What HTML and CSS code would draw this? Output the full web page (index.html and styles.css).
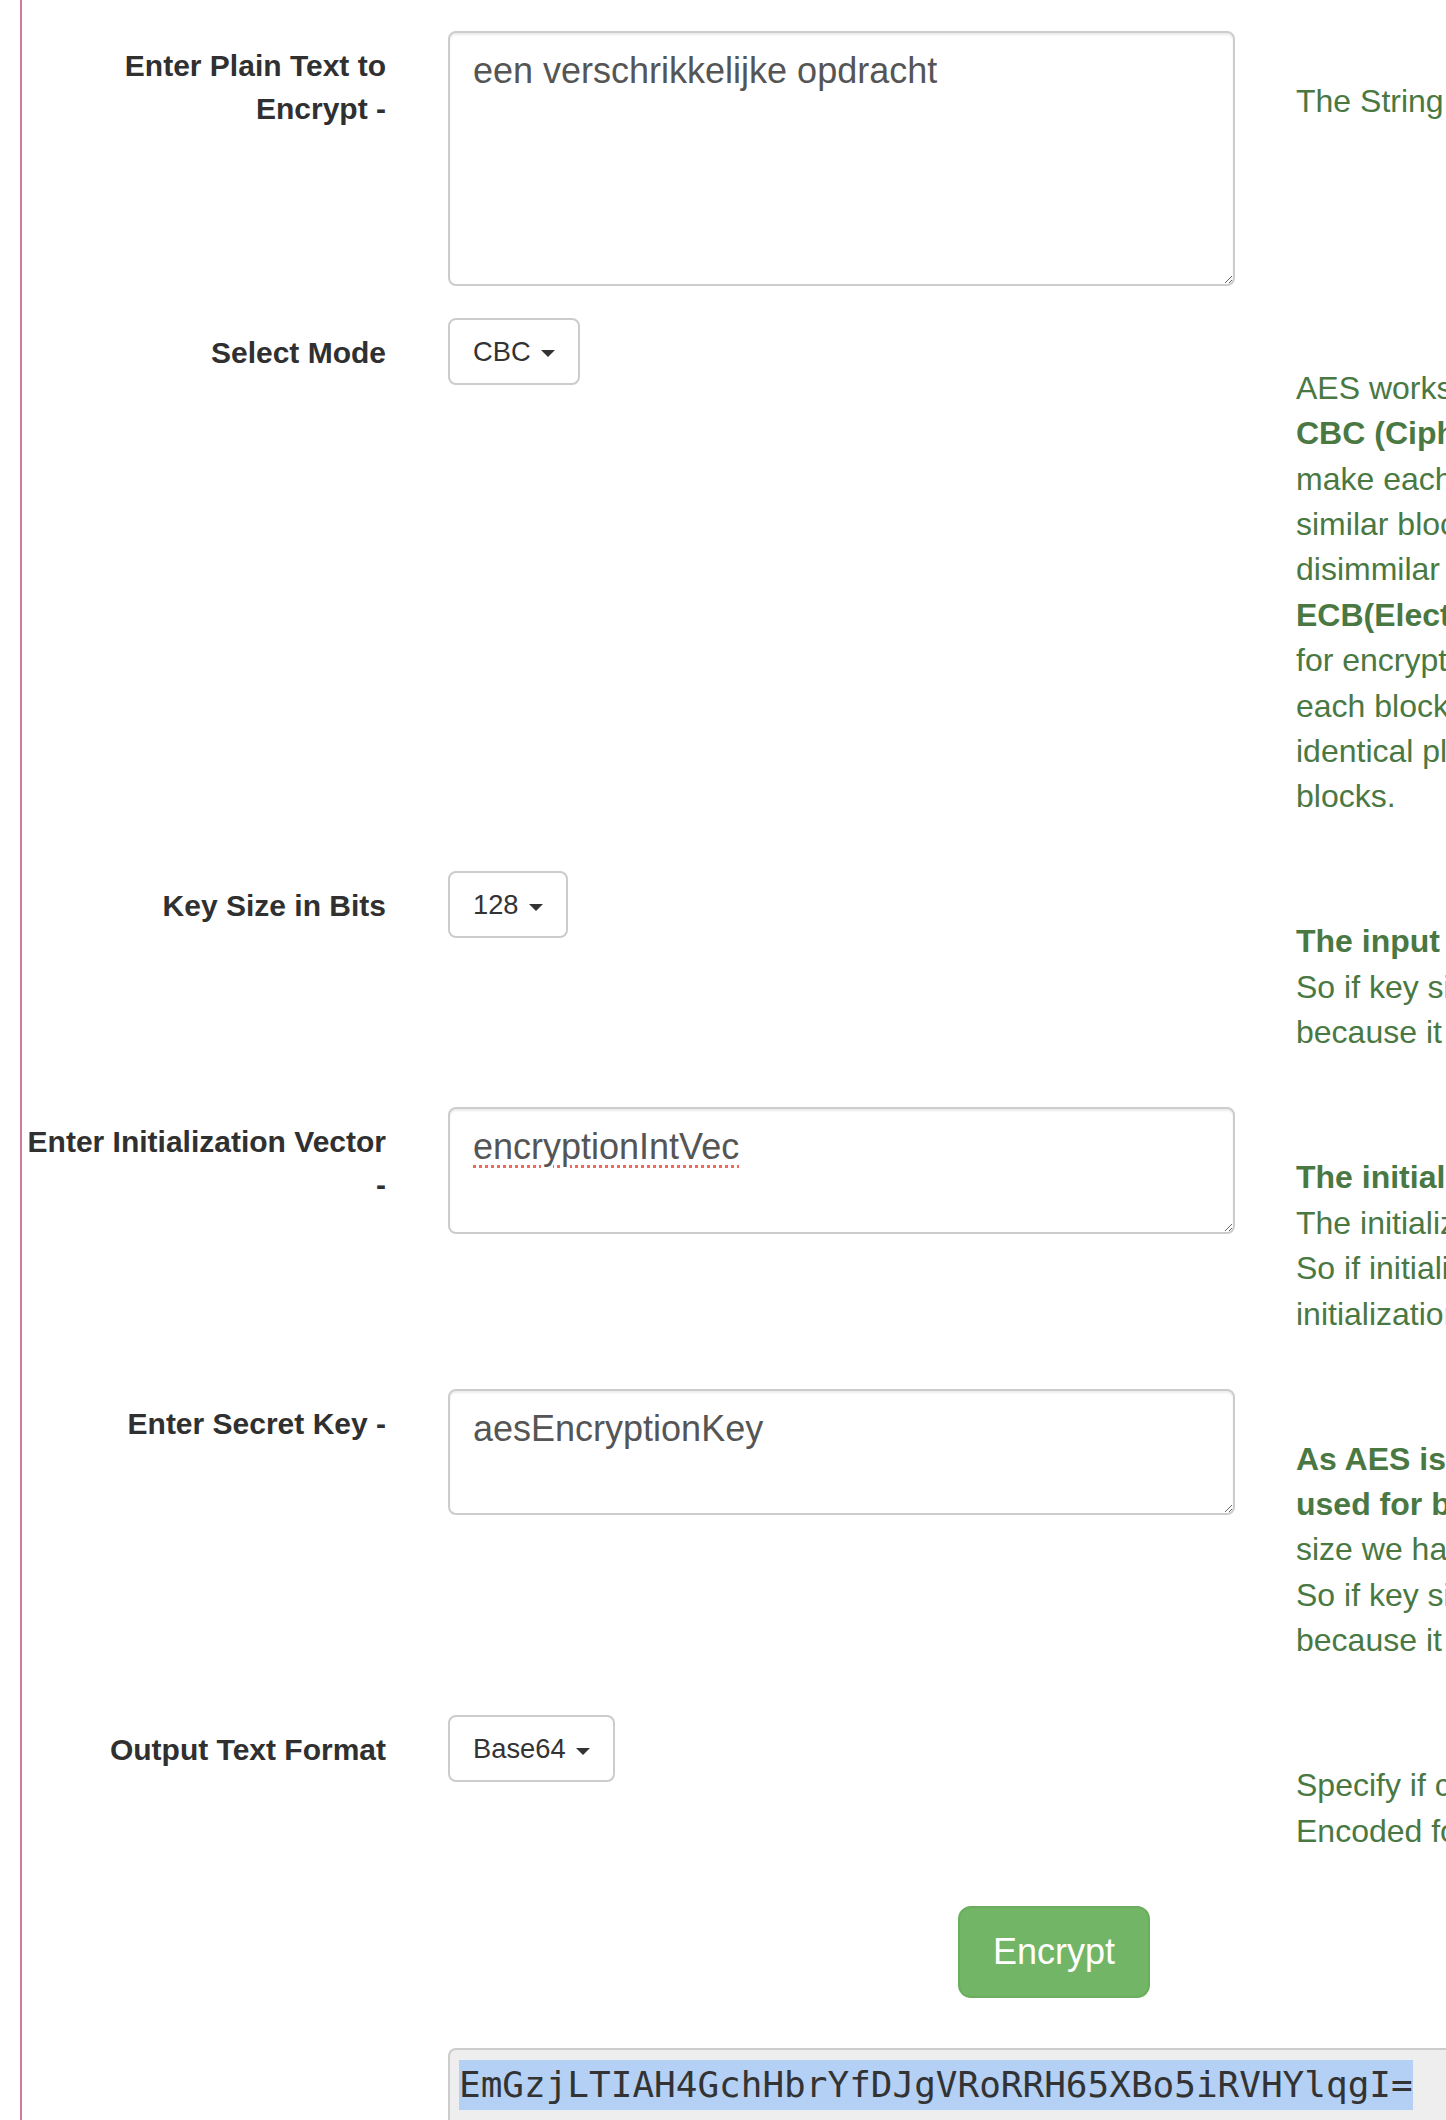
FILE: index.html
```html
<!DOCTYPE html>
<html lang="en">
<head>
<meta charset="utf-8">
<title>AES Encryption</title>
<link rel="stylesheet" href="styles.css">
</head>
<body>
<div class="page">
  <form class="form">
    <div class="group">
      <label class="label">Enter Plain Text to<br>Encrypt -</label>
      <div class="control">
        <textarea class="field field-tall" spellcheck="false">een verschrikkelijke opdracht</textarea>
      </div>
      <div class="help">
        <span class="line">The String that you want to encrypt.</span>
      </div>
    </div>

    <div class="group">
      <label class="label">Select Mode</label>
      <div class="control">
        <button type="button" class="dropdown">CBC<span class="caret"></span></button>
      </div>
      <div class="help">
        <span class="line">AES works with different modes of operation.</span>
        <span class="line"><b>CBC (Cipher Block Chaining)</b> requires an IV to</span>
        <span class="line">make each message unique, which means that</span>
        <span class="line">similar blocks of plain text are encrypted into</span>
        <span class="line">disimmilar cipher text blocks.</span>
        <span class="line"><b>ECB(Electronic Code Book)</b> does not need an IV</span>
        <span class="line">for encryption, the plain text is divided into blocks and</span>
        <span class="line">each block is encrypted separately, hence</span>
        <span class="line">identical plain text blocks give identical cipher text</span>
        <span class="line">blocks.</span>
      </div>
    </div>

    <div class="group">
      <label class="label">Key Size in Bits</label>
      <div class="control">
        <button type="button" class="dropdown">128<span class="caret"></span></button>
      </div>
      <div class="help">
        <span class="line"><b>The input key length must match the key size.</b></span>
        <span class="line">So if key size is 128 bits, the secret key must be 16 characters</span>
        <span class="line">because it is 16 bytes long.</span>
      </div>
    </div>

    <div class="group">
      <label class="label">Enter Initialization Vector<br>-</label>
      <div class="control">
        <textarea class="field field-iv" spellcheck="false">encryptionIntVec</textarea>
      </div>
      <div class="help">
        <span class="line"><b>The initialization vector is optional.</b></span>
        <span class="line">The initialization vector is 16 bytes long.</span>
        <span class="line">So if initialization vector is used, it must be a 16 character</span>
        <span class="line">initialization vector.</span>
      </div>
    </div>

    <div class="group">
      <label class="label">Enter Secret Key -</label>
      <div class="control">
        <textarea class="field field-key" spellcheck="false">aesEncryptionKey</textarea>
      </div>
      <div class="help">
        <span class="line"><b>As AES is a symmetric encryption, the same secret key is</b></span>
        <span class="line"><b>used for both encryption and decryption.</b> Based on the key</span>
        <span class="line">size we have selected, the length of the secret key varies.</span>
        <span class="line">So if key size is 128 bits, the secret key must be 16 characters</span>
        <span class="line">because it is 16 bytes long.</span>
      </div>
    </div>

    <div class="group">
      <label class="label">Output Text Format</label>
      <div class="control">
        <button type="button" class="dropdown">Base64<span class="caret"></span></button>
      </div>
      <div class="help">
        <span class="line">Specify if cipher text should be Hex or Base64</span>
        <span class="line">Encoded format.</span>
      </div>
    </div>

    <div class="actions">
      <button type="button" class="btn-encrypt">Encrypt</button>
    </div>

    <div class="output-row">
      <div class="output"><span class="selected">EmGzjLTIAH4GchHbrYfDJgVRoRRH65XBo5iRVHYlqgI=</span></div>
    </div>
  </form>
</div>
</body>
</html>
```
FILE: styles.css
```css
html, body {
  margin: 0;
  padding: 0;
  overflow: hidden;
  background: #fff;
}

body {
  font-family: "Liberation Sans", Arial, Helvetica, sans-serif;
  color: #333;
  width: 1446px;
  height: 2120px;
}

.page {
  margin-left: 20px;
  border-left: 2px solid #d27b9c;
  height: 2120px;
  width: 2100px;
  box-sizing: border-box;
  padding-top: 31px;
}

.form {
  display: flex;
  flex-direction: column;
}

.group {
  display: grid;
  grid-template-columns: 426px 787px 848px;
  align-items: start;
  margin-bottom: 31.7px;
}

.label {
  box-sizing: border-box;
  padding-right: 62px;
  padding-top: 14px;
  text-align: right;
  font-weight: bold;
  font-size: 30px;
  line-height: 42.7px;
  white-space: nowrap;
  color: #303030;
}

.control {
  display: flex;
  align-items: flex-start;
}

.field {
  box-sizing: border-box;
  width: 787px;
  border: 2px solid #ccc;
  border-radius: 8px;
  box-shadow: inset 0 2px 2px rgba(0, 0, 0, 0.075);
  padding: 14px 23px;
  margin: 0;
  font-family: "Liberation Sans", Arial, Helvetica, sans-serif;
  font-size: 36px;
  line-height: 48.4px;
  color: #555;
  background: #fff;
  resize: vertical;
  outline: none;
}

.field-tall { height: 255px; }
.field-iv {
  height: 127px;
  text-decoration: underline dotted #ee6a5c;
  text-decoration-thickness: 3px;
  text-underline-offset: 6px;
}
.field-key { height: 126px; }

.dropdown {
  box-sizing: border-box;
  display: inline-flex;
  align-items: center;
  height: 67px;
  padding: 0 23px;
  border: 2px solid #ccc;
  border-radius: 8px;
  background: #fff;
  color: #333;
  font-family: "Liberation Sans", Arial, Helvetica, sans-serif;
  font-size: 27.3px;
  line-height: 1;
}

.caret {
  display: inline-block;
  width: 0;
  height: 0;
  margin-left: 10px;
  margin-top: 5px;
  border-top: 7.5px solid #333;
  border-left: 7.5px solid transparent;
  border-right: 7.5px solid transparent;
}

.help {
  box-sizing: border-box;
  padding-left: 61px;
  padding-top: 48px;
  padding-bottom: 20px;
  font-size: 32px;
  line-height: 45.4px;
  color: #4a7843;
}

.line {
  display: block;
  white-space: nowrap;
}

.help b {
  font-weight: bold;
}

.actions {
  display: flex;
  padding-left: 936px;
  margin-bottom: 50px;
}

.btn-encrypt {
  box-sizing: border-box;
  width: 192px;
  height: 92px;
  display: flex;
  align-items: center;
  justify-content: center;
  background: #73b566;
  border: 2px solid #69ae5c;
  border-radius: 13px;
  color: #fff;
  font-family: "Liberation Sans", Arial, Helvetica, sans-serif;
  font-size: 36px;
  line-height: 1;
  padding: 0;
}

.output-row {
  padding-left: 426px;
}

.output {
  box-sizing: border-box;
  width: 1400px;
  height: 120px;
  background: #eee;
  border: 2px solid #ccc;
  border-right: none;
  border-bottom: none;
  border-top-left-radius: 8px;
  padding: 10px 9px;
  font-family: "DejaVu Sans Mono", "Liberation Mono", monospace;
  font-size: 36px;
  line-height: 50px;
  color: #333;
  white-space: nowrap;
}

.selected {
  background: #b4d0f4;
  display: inline-block;
  line-height: 50px;
}
```
